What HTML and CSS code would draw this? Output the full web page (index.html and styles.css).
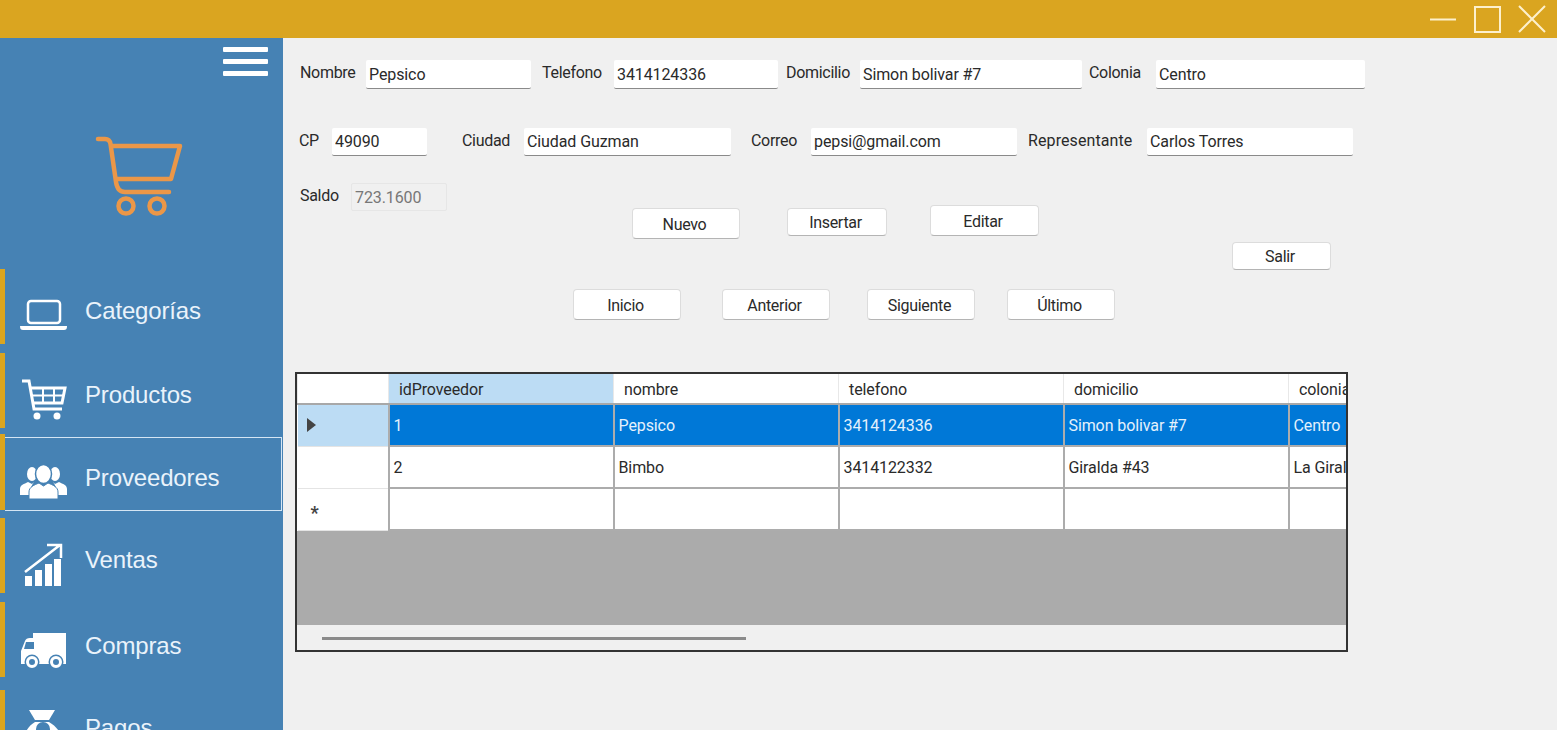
FILE: index.html
```html
<!DOCTYPE html>
<html lang="es">
<head>
    <meta charset="UTF-8">
    <title>Proveedores</title>
    <link rel="stylesheet" href="styles.css">
</head>
<body>
    <header class="titlebar">
        <svg class="win-btn" width="26" height="26" viewBox="0 0 26 26"><path d="M0 13.500H26" /></svg>
        <svg class="win-btn" width="26" height="26" viewBox="0 0 26 26"><rect x="1" y="1" width="25" height="25" /></svg>
        <svg class="win-btn" width="28" height="26" viewBox="0 0 28 26"><path d="M1 0L27 26M27 0L1 26" /></svg>
    </header>

    <div class="app">
        <aside class="sidebar">
            <div class="burger"><span></span><span></span><span></span></div>

            <svg class="logo" width="90" height="84" viewBox="0 0 90 84">
                <path d="M3 3H10C13 3 15 5 15.500 8L21 46C22 53 25 56 30 56H74" />
                <path d="M17 10H85L76 43H22" />
                <circle cx="31" cy="70" r="7.500" />
                <circle cx="62" cy="70" r="7.500" />
            </svg>

            <nav class="menu">
                <a class="item">
                    <svg class="ico" width="47" height="36" viewBox="0 0 47 36">
                        <rect class="line" x="8" y="4" width="32" height="22" rx="3" />
                        <path d="M0 29H47C47 32 46 33 44 33H3C1 33 0 32 0 29Z" />
                    </svg>
                    Categorías
                </a>
                <a class="item">
                    <svg class="ico" width="47" height="42" viewBox="0 0 47 42">
                        <path class="heavy" d="M2 3H9L14 31H42" />
                        <path class="heavy" d="M11 10H45L42 25H13" />
                        <path class="thin" d="M12 17.500H43M23 10V25M34 10V25" />
                        <circle cx="17" cy="38" r="3.500" />
                        <circle cx="37" cy="38" r="3.500" />
                    </svg>
                    Productos
                </a>
                <a class="item active">
                    <svg class="ico" width="47" height="36" viewBox="0 0 47 36">
                        <ellipse cx="12" cy="10" rx="5" ry="7" />
                        <ellipse cx="35" cy="10" rx="5" ry="7" />
                        <path d="M0 31V25C0 21 4 20 8 18L12 20L14 18C11 22 10 26 10 31Z" />
                        <path d="M47 31V25C47 21 43 20 39 18L35 20L33 18C36 22 37 26 37 31Z" />
                        <ellipse cx="23.500" cy="10" rx="8" ry="9.500" stroke="#4682b4" stroke-width="1.500" />
                        <path d="M9 35V28C9 23 14 21 19 19L23.500 22L28 19C33 21 38 23 38 28V35Z" stroke="#4682b4" stroke-width="1" />
                    </svg>
                    Proveedores
                </a>
                <a class="item">
                    <svg class="ico" width="47" height="44" viewBox="0 0 47 44">
                        <path d="M5 34H12V44H5ZM15 28H22V44H15ZM25 22H32V44H25ZM34 17H41V44H34Z" />
                        <path class="line" d="M5 30L40 3M27 3H41V16" />
                    </svg>
                    Ventas
                </a>
                <a class="item">
                    <svg class="ico" width="47" height="38" viewBox="0 0 47 38">
                        <path d="M13 2H46V33H1V20L5 10Q6 7 10 7H13Z" />
                        <path d="M6 11H14V18H4Z" fill="#4682b4" />
                        <circle cx="12" cy="31" r="7.500" fill="#4682b4" />
                        <circle cx="36" cy="31" r="7.500" fill="#4682b4" />
                        <circle class="wheel" cx="12" cy="31" r="4.500" />
                        <circle class="wheel" cx="36" cy="31" r="4.500" />
                    </svg>
                    Compras
                </a>
                <a class="item">
                    <svg class="ico" width="47" height="46" viewBox="0 0 47 46">
                        <path d="M9 1H35L29 11H15Z" />
                        <path d="M15 13H29C36 17 42 24 42 32C42 40 35 45 22 45C9 45 4 40 4 32C4 24 8 17 15 13Z" />
                        <circle cx="23" cy="20" r="7" fill="#4682b4" />
                    </svg>
                    Pagos
                </a>
            </nav>
        </aside>

        <main class="content">
            <div class="row">
                <div class="field f-nombre"><label>Nombre</label><input type="text" value="Pepsico"></div>
                <div class="field f-telefono"><label>Telefono</label><input type="text" value="3414124336"></div>
                <div class="field f-domicilio"><label>Domicilio</label><input type="text" value="Simon bolivar #7"></div>
                <div class="field f-colonia"><label>Colonia</label><input type="text" value="Centro"></div>
            </div>
            <div class="row row-two">
                <div class="field f-cp"><label>CP</label><input type="text" value="49090"></div>
                <div class="field f-ciudad"><label>Ciudad</label><input type="text" value="Ciudad Guzman"></div>
                <div class="field f-correo"><label>Correo</label><input type="text" value="pepsi@gmail.com"></div>
                <div class="field f-repre"><label>Representante</label><input type="text" value="Carlos Torres"></div>
            </div>
            <div class="row row-three">
                <div class="field f-saldo"><label>Saldo</label><input type="text" value="723.1600" disabled></div>
            </div>

            <div class="actions">
                <button class="b-nuevo">Nuevo</button>
                <button class="b-insertar">Insertar</button>
                <button class="b-editar">Editar</button>
                <button class="b-salir">Salir</button>
            </div>
            <div class="pager">
                <button>Inicio</button>
                <button>Anterior</button>
                <button>Siguiente</button>
                <button>Último</button>
            </div>

            <div class="grid">
                <table>
                    <colgroup>
                        <col class="c-head"><col class="c-data"><col class="c-data"><col class="c-data"><col class="c-data"><col class="c-last">
                    </colgroup>
                    <thead>
                        <tr>
                            <th></th>
                            <th class="sel-head">idProveedor</th>
                            <th>nombre</th>
                            <th>telefono</th>
                            <th>domicilio</th>
                            <th>colonia</th>
                        </tr>
                    </thead>
                    <tbody>
                        <tr class="selected">
                            <th class="sel-head"><span class="arrow"></span></th>
                            <td>1</td>
                            <td>Pepsico</td>
                            <td>3414124336</td>
                            <td>Simon bolivar #7</td>
                            <td>Centro</td>
                        </tr>
                        <tr>
                            <th></th>
                            <td>2</td>
                            <td>Bimbo</td>
                            <td>3414122332</td>
                            <td>Giralda #43</td>
                            <td>La Giralda</td>
                        </tr>
                        <tr>
                            <th class="new-row">*</th>
                            <td></td>
                            <td></td>
                            <td></td>
                            <td></td>
                            <td></td>
                        </tr>
                    </tbody>
                </table>
                <div class="empty"></div>
                <div class="scroll"><span class="thumb"></span></div>
            </div>
        </main>
    </div>
</body>
</html>
```

FILE: styles.css
```css
* {
    box-sizing: border-box;
}

html, body {
    margin: 0;
    height: 730px;
    overflow: hidden;
}

body {
    background-color: #f0f0f0;
    color: #2a2a2a;
    font-family: Roboto, "Liberation Sans", sans-serif;
    font-size: 16px;
}

/* title bar */
.titlebar {
    height: 38px;
    background-color: #daa520;
    display: flex;
    justify-content: flex-end;
    align-items: flex-start;
    gap: 18px;
    padding: 6px 11px 0 0;
}

.win-btn {
    fill: none;
    stroke: #fdf0cc;
    stroke-width: 2;
    overflow: visible;
}

.app {
    display: flex;
    height: 692px;
}

/* side menu */
.sidebar {
    width: 283px;
    flex-shrink: 0;
    background-color: #4682b4;
    overflow: hidden;
}

.burger {
    display: flex;
    flex-direction: column;
    gap: 7px;
    width: 45px;
    margin: 9px 0 0 223px;
}

.burger span {
    height: 5px;
    background-color: white;
    border-radius: 1px;
}

.logo {
    display: block;
    margin: 60px 0 0 95px;
    fill: none;
    stroke: #eb9748;
    stroke-width: 4.500;
    stroke-linecap: round;
    stroke-linejoin: round;
}

.menu {
    margin-top: 49px;
}

.item {
    display: flex;
    align-items: center;
    height: 75px;
    margin-bottom: 9px;
    padding: 8px 0 0 15px;
    border-left: 5px solid #daa520;
    color: #eaf3fb;
    font-family: "Liberation Sans", Arial, sans-serif;
    font-size: 24px;
    letter-spacing: -0.150px;
    position: relative;
}

.item.active {
    height: 76px;
    margin-top: -3px;
    margin-bottom: 8px;
    padding-top: 12px;
}

.item.active::after {
    content: "";
    position: absolute;
    top: 3px;
    left: 0;
    right: 1px;
    bottom: -1px;
    border: 1px solid #d5e6f4;
    border-left: none;
}

.item:nth-child(5) {
    margin-bottom: 13px;
    padding-top: 13px;
}

.item:nth-child(6) {
    padding-top: 0;
}

.ico {
    width: 47px;
    margin: 8px 18px 0 0;
    flex-shrink: 0;
    fill: white;
}

.ico .line {
    fill: none;
    stroke: white;
    stroke-width: 2.500;
}

.ico .heavy {
    fill: none;
    stroke: white;
    stroke-width: 3;
}

.ico .thin {
    fill: none;
    stroke: white;
    stroke-width: 2;
}

.ico .wheel {
    fill: none;
    stroke: white;
    stroke-width: 3;
}

/* form */
.content {
    flex: 1;
    padding-top: 22px;
}

.row {
    display: flex;
    height: 29px;
    padding-left: 17px;
}

.row-two {
    height: 28px;
    margin-top: 39px;
    padding-left: 16px;
}

.row-three {
    margin-top: 27px;
    height: 28px;
}

.field {
    display: flex;
}

.field label {
    padding-top: 3px;
    letter-spacing: -0.300px;
    white-space: nowrap;
}

.field input {
    height: 29px;
    padding: 0 3px;
    border: none;
    border-bottom: 1px solid #8a8a8a;
    border-radius: 2px;
    background-color: white;
    color: #2a2a2a;
    font-family: inherit;
    font-size: 16px;
    letter-spacing: -0.100px;
}

.row-two input {
    height: 28px;
}

.field input:disabled {
    height: 28px;
    border: 1px solid #e6e6e6;
    background-color: #f0f0f0;
    color: #777;
}

.f-nombre label { width: 66px; }
.f-nombre input { width: 165px; }
.f-telefono { margin-left: 11px; }
.f-telefono label { width: 72px; }
.f-telefono input { width: 164px; }
.f-domicilio { margin-left: 8px; }
.f-domicilio label { width: 74px; }
.f-domicilio input { width: 222px; }
.f-colonia { margin-left: 7px; }
.f-colonia label { width: 67px; }
.f-colonia input { width: 209px; }

.f-cp label { width: 33px; }
.f-cp input { width: 95px; }
.f-ciudad { margin-left: 35px; }
.f-ciudad label { width: 62px; }
.f-ciudad input { width: 207px; }
.f-correo { margin-left: 20px; }
.f-correo label { width: 60px; }
.f-correo input { width: 206px; }
.f-repre { margin-left: 11px; }
.f-repre label { width: 119px; letter-spacing: 0.100px; }
.f-repre input { width: 206px; }

.f-saldo label { width: 51px; }
.f-saldo input { width: 96px; }

/* buttons */
button {
    height: 31px;
    width: 108px;
    padding: 1px 3px 0 0;
    border: 1px solid #dcdcdc;
    border-bottom-color: #b4b4b4;
    border-radius: 4px;
    background-color: white;
    color: #2a2a2a;
    font-family: inherit;
    font-size: 16px;
    letter-spacing: -0.300px;
}

.actions {
    display: flex;
    align-items: flex-start;
    height: 65px;
    margin-top: -6px;
    padding-left: 349px;
}

.b-nuevo {
    margin-top: 3px;
}

.b-insertar {
    width: 100px;
    height: 28px;
    margin: 3px 0 0 47px;
}

.b-editar {
    width: 109px;
    margin-left: 43px;
}

.b-salir {
    width: 99px;
    height: 28px;
    margin: 37px 0 0 193px;
}

.pager {
    display: flex;
    margin-top: 19px;
    padding-left: 290px;
}

.pager button:nth-child(2) { margin-left: 41px; }
.pager button:nth-child(3) { margin-left: 37px; }
.pager button:nth-child(4) { margin-left: 32px; }

/* data grid */
.grid {
    display: flex;
    flex-direction: column;
    width: 1053px;
    height: 280px;
    margin: 52px 0 0 12px;
    border: 2px solid #333;
    overflow: hidden;
    background-color: white;
}

table {
    width: 1051px;
    flex-shrink: 0;
    table-layout: fixed;
    border-collapse: collapse;
    letter-spacing: -0.100px;
}

.c-head { width: 91px; }
.c-data { width: 225px; }
.c-last { width: 60px; }

thead tr {
    height: 30px;
}

thead th {
    padding: 2px 0 0 10px;
    border-left: 1px solid #e8e8e8;
    border-bottom: 2px solid #a8a8a8;
    font-weight: normal;
    text-align: left;
    white-space: nowrap;
    overflow: hidden;
}

tbody tr {
    height: 42px;
}

tbody th {
    padding: 0;
    font-weight: normal;
    border-bottom: 1px solid #e4e4e4;
}

td {
    padding: 0 0 0 4px;
    border-left: 2px solid #acacac;
    border-bottom: 2px solid #acacac;
    white-space: nowrap;
    overflow: hidden;
}

.sel-head,
thead .sel-head {
    background-color: #bcdcf4;
}

.selected td {
    background-color: #0078d7;
    color: #e4f1fc;
}

.arrow {
    display: block;
    width: 0;
    height: 0;
    margin-left: 9px;
    border-left: 9px solid #444;
    border-top: 7px solid transparent;
    border-bottom: 7px solid transparent;
}

.new-row {
    padding: 7px 0 0 13px;
    color: #444;
    font-size: 18px;
    font-weight: bold;
    line-height: 1;
    text-align: left;
}

.empty {
    flex: 1;
    background-color: #ababab;
}

.scroll {
    height: 25px;
    padding: 12px 0 0 25px;
    background-color: #f0f0f0;
}

.thumb {
    display: block;
    width: 424px;
    height: 3px;
    background-color: #8a8a8a;
}
```
